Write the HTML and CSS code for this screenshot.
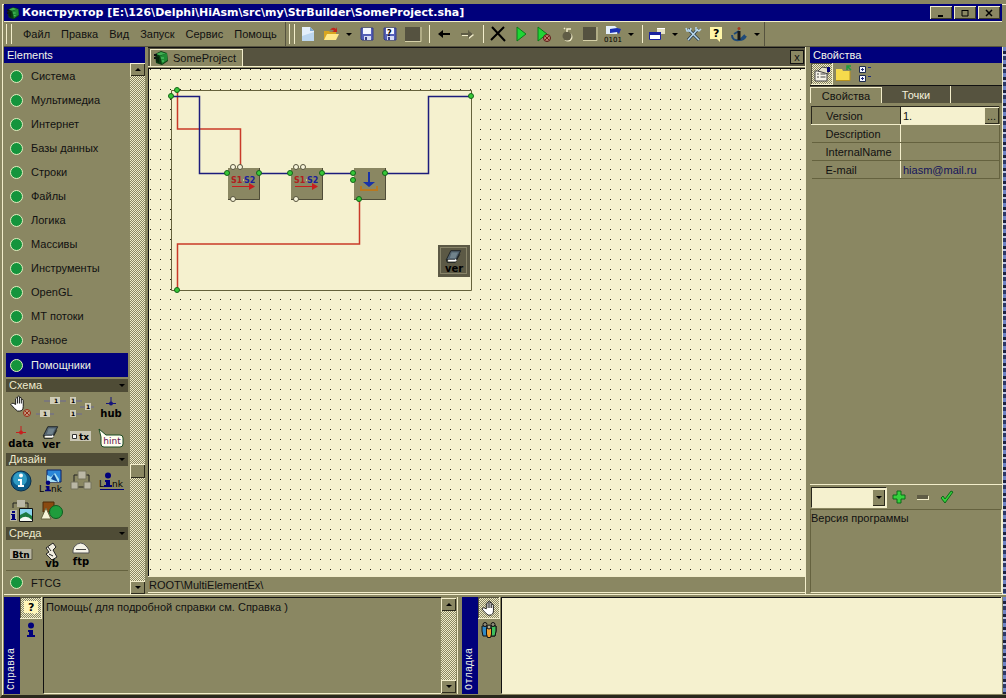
FILE: index.html
```html
<!DOCTYPE html>
<html lang="ru">
<head>
<meta charset="utf-8">
<title>Конструктор</title>
<link rel="stylesheet" href="styles.css">
</head>
<body>
<svg class="defs" aria-hidden="true">
  <symbol id="cube" viewBox="0 0 16 16"><path d="M2 4 8 1l6 2 1 8-6 4-6-2z" fill="#0a3d12"/><path d="M7 6l7-3 .5 7L9 14z" fill="#1f8a34"/><path d="M3 4l5-2 5 1.500-6 2z" fill="#3fae52"/><path d="M3 6l3 1v6l-3-2z" fill="#08240c"/><path d="M8 8h3M9 11h2" stroke="#5bd070"/><path d="M1 5h3M1 8h2" stroke="#111" stroke-width="2"/></symbol>
  <symbol id="floppy" viewBox="0 0 16 16"><path d="M2 2h12v12H3l-1-1z" fill="#5560b8" stroke="#343c88"/><path d="M4 2h8v6H4z" fill="#f4f6ff"/><path d="M5 10h7v4H5z" fill="#d5daf2"/><path d="M6 11h2v3H6z" fill="#343c88"/></symbol>
  <symbol id="book" viewBox="0 0 20 20"><path d="M7 3h11l-5 10H2z" fill="#53636f" stroke="#1b2022"/><path d="M8 5h7l-3 6H6z" fill="#71838c"/><path d="M2 13l1 3h9l5-9" fill="none" stroke="#1b2022"/><path d="M4 14h8l1-1" fill="none" stroke="#fff" stroke-width="2"/></symbol>
  <symbol id="man" viewBox="0 0 16 16"><circle cx="8" cy="3.500" r="3" fill="#00007b"/><path d="M5 8h5v5h2v2H4v-2h2v-3H5z" fill="#00007b"/></symbol>
  <symbol id="hand" viewBox="0 0 18 18"><path d="M6 10V4q1-2 2 0V2q1.500-2 2 0v1q2-1.500 2 1v1q2-1 2 1v6q0 5-4 5H8Q5 15 1 10q1-2 3-1z" fill="#fff" stroke="#111"/><path d="M8 4v5M10 3v6M12 5v4" stroke="#111"/></symbol>
</svg>
<div class="app">
  <header class="title">
    <svg class="i14"><use href="#cube"/></svg>
    <h1>Конструктор [E:\126\Delphi\HiAsm\src\my\StrBuilder\SomeProject.sha]</h1>
    <button class="win" aria-label="Свернуть"><svg viewBox="0 0 10 10"><path d="M2 8h5" stroke="#000" stroke-width="2"/></svg></button>
    <button class="win" aria-label="Развернуть"><svg viewBox="0 0 10 10"><path d="M2 2.500h6M2 2v6h6V2" fill="none" stroke="#000"/></svg></button>
    <button class="win" aria-label="Закрыть"><svg viewBox="0 0 10 10"><path d="M2 2l6 6M8 2l-6 6" stroke="#000" stroke-width="1.500"/></svg></button>
  </header>
  <div class="bars">
    <nav class="menu grip"><button>Файл</button><button>Правка</button><button>Вид</button><button>Запуск</button><button>Сервис</button><button>Помощь</button></nav>
    <div class="tools grip">
      <button aria-label="Новый"><svg viewBox="0 0 16 16"><path d="M2 1h8l4 4v10H2z" fill="#e4effa"/><path d="M2 10l12-4v9H2z" fill="#bcd6ee"/><path d="M10 1v4h4z" fill="#7fa9d3"/></svg></button>
      <button aria-label="Открыть"><svg viewBox="0 0 16 16"><path d="M1 5h5l1 1h6v8H1z" fill="#d8a520"/><path d="M4 8h12l-3 6H1z" fill="#ffe98a"/><path d="M7 4q3-4 6-1l1-2v5h-5l2-1q-1-2-4-1z" fill="#c3261c"/></svg></button>
      <button class="caret" aria-label="Недавние"></button>
      <button aria-label="Сохранить"><svg><use href="#floppy"/></svg></button>
      <button aria-label="Сохранить как"><svg viewBox="0 0 16 16"><use href="#floppy"/><text x="5" y="10" class="q">?</text></svg></button>
      <button aria-label="Закрыть проект"><svg class="sq" viewBox="0 0 16 16"><path d="M0 1h15v14H0z" fill="#555240"/><path d="M0 15.500h16V1" fill="none" stroke="#d6d1a8"/></svg></button>
      <i class="sep"></i>
      <button aria-label="Назад"><svg viewBox="0 0 16 16"><path d="M2 8l5-4v3h7v2H7v3z"/></svg></button>
      <button aria-label="Вперёд"><svg viewBox="0 0 16 16"><path d="M15 9l-5-4v3H3v2h7v3z" fill="#f3eecb"/><path d="M14 8L9 4v3H2v2h7v3z" fill="#5f5c45"/></svg></button>
      <i class="sep"></i>
      <button aria-label="Удалить"><svg viewBox="0 0 16 16"><path d="M2 1l13 14M14 1L1 14" stroke="#000" stroke-width="2"/></svg></button>
      <button aria-label="Запуск"><svg viewBox="0 0 16 16"><path d="M4 1l9 7-9 7z" fill="#1fd534" stroke="#0b7a18"/></svg></button>
      <button aria-label="Стоп"><svg viewBox="0 0 16 16"><path d="M2 1l9 7-9 7z" fill="#1fd534" stroke="#0b7a18"/><circle cx="11" cy="12" r="3.500" fill="#b98070" stroke="#5a1712"/><path d="M9 10l4 4M13 10l-4 4" stroke="#7a1712"/></svg></button>
      <button aria-label="Отладка"><svg viewBox="0 0 16 16"><circle cx="9" cy="11" r="4.500" fill="#f3eecb"/><circle cx="8" cy="10" r="4.500" fill="#5f5c45"/><path d="M8 6V3h4M5 2l1 1" fill="none" stroke="#f3eecb" stroke-width="1.500"/></svg></button>
      <button aria-label="Остановить"><svg class="sq" viewBox="0 0 16 16"><path d="M1 1h13v13H1z" fill="#555240"/><path d="M1 14.500h14V1" fill="none" stroke="#d6d1a8"/></svg></button>
      <button aria-label="Код"><svg viewBox="0 0 16 16"><path d="M1 0h9l2 2v6H1z" fill="#e4effa"/><path d="M5 3l7-1 4 1-2 5-2-2-7 1z" fill="#1a2fb4"/><text x="8" y="16" class="bits">0101</text></svg></button>
      <button class="caret" aria-label="Варианты кода"></button>
      <i class="sep"></i>
      <button aria-label="Окна"><svg viewBox="0 0 16 16"><path d="M8 2h8v6H8z" fill="#e6e2c4"/><path d="M8 2h8v1H8z" fill="#fff"/><path d="M.5 6.500h11v7H.5z" fill="#fff" stroke="#1a22a0"/><path d="M0 6h12v3H0z" fill="#1a22a0"/></svg></button>
      <button class="caret" aria-label="Список окон"></button>
      <button aria-label="Настройки"><svg viewBox="0 0 16 16"><path d="M3 3l11 11M13 3L3 14" stroke="#26394c" stroke-width="3"/><path d="M3 3l11 11M13 3L3 14" stroke="#b8d8ee" stroke-width="1.500"/><path d="M1 2l1 3 3 0 1-3M11 1v3l3 1 2-2" fill="none" stroke="#b8d8ee" stroke-width="1.500"/></svg></button>
      <button aria-label="Справка"><svg viewBox="0 0 16 16"><path d="M2 1h12v12h-2v3l-3-3H2z" fill="#fff6a8"/><text x="5" y="11" class="q big">?</text></svg></button>
      <button aria-label="Сайт"><svg viewBox="0 0 16 16"><path d="M1 9q0 6 7 5 5 0 7-4M3 8l5-3M14 9l-5 5" fill="none" stroke="#1f4a78" stroke-width="2"/><path d="M8 5v9" stroke="#181818" stroke-width="3"/><circle cx="8" cy="2.500" r="1.500" fill="#a03a20"/></svg></button>
      <button class="caret" aria-label="Ещё"></button>
    </div>
  </div>

  <main class="main">
    <aside class="elements">
      <h2 class="cap">Elements</h2>
      <div class="scrollpane">
        <div class="list">
          <button class="cat">Система</button><button class="cat">Мультимедиа</button><button class="cat">Интернет</button><button class="cat">Базы данных</button><button class="cat">Строки</button><button class="cat">Файлы</button><button class="cat">Логика</button><button class="cat">Массивы</button><button class="cat">Инструменты</button><button class="cat">OpenGL</button><button class="cat">МТ потоки</button><button class="cat">Разное</button><button class="cat on">Помощники</button>
          <h3 class="sec">Схема</h3>
          <div class="grid">
            <svg viewBox="0 0 30 30"><svg x="4" y="3" width="17" height="17"><use href="#hand"/></svg><circle cx="21" cy="21" r="3.500" fill="#c09a80" stroke="#9a2a14"/><path d="M19 19l4 4M23 19l-4 4" stroke="#9a2a14"/></svg>
            <svg viewBox="0 0 30 30"><path d="M8 9h22M0 22h18" stroke="#6b6894"/><path d="M14 5h10v7H14zM4 18h10v7H4z" fill="#d0cdb8"/><text x="18" y="11" class="one">1</text><text x="7" y="24" class="one">1</text></svg>
            <svg viewBox="0 0 30 30"><path d="M4 9h12M4 22h12M14 15h14" stroke="#6b6894"/><path d="M4 5h6v7H4zM4 18h6v7H4zM19 11h6v7h-6z" fill="#d0cdb8"/><text x="5" y="11" class="one">1</text><text x="5" y="24" class="one">1</text><text x="20" y="17" class="one">1</text></svg>
            <svg viewBox="0 0 30 30"><path d="M15 5v8M10 11.500h10" stroke="#14147b"/><circle cx="15" cy="11.500" r="2" fill="#14147b"/><text x="15" y="25" class="lbl">hub</text></svg>
            <svg viewBox="0 0 30 30"><path d="M15 4v8M10 10.500h10" stroke="#c81e1e"/><circle cx="15" cy="10.500" r="2" fill="#c81e1e"/><text x="15" y="25" class="lbl">data</text></svg>
            <svg viewBox="0 0 30 30"><svg x="5" y="2" width="19" height="18"><use href="#book"/></svg><text x="15" y="26" class="lbl">ver</text></svg>
            <svg viewBox="0 0 30 30"><path d="M4 9h21v10H4z" fill="#c9c6b4"/><path d="M6.500 12.500h4v4h-4z" fill="#fff" stroke="#333"/><text x="18" y="18" class="lbl sm">tx</text></svg>
            <svg viewBox="0 0 30 30"><path d="M3 7l7 6h14q3 0 3 3v6q0 3-3 3H8q-3 0-3-3v-7z" fill="#fffef0" stroke="#1b4a22"/><text x="16" y="22" class="hint">hint</text></svg>
          </div>
          <h3 class="sec">Дизайн</h3>
          <div class="grid">
            <svg viewBox="0 0 30 30"><circle cx="15" cy="15" r="10" fill="#0d5a86" stroke="#0a2f4c"/><circle cx="14" cy="13" r="7" fill="#2f9bc4"/><circle cx="15" cy="9.500" r="2" fill="#fff"/><path d="M12 13h4v6h2v2h-6v-2h2v-4h-2z" fill="#fff"/></svg>
            <svg viewBox="0 0 30 30"><path d="M11 4h14v12H11z" fill="#2a86d8" stroke="#0a1f66"/><path d="M11 16V9l4 2 4-4 4 6v3z" fill="#a8e0f4"/><path d="M15 13l3-5 4 8z" fill="#0c4c9c"/><text x="3" y="26" class="lnk">L</text><svg x="6" y="14" width="12" height="12"><use href="#man"/></svg><text x="15" y="26" class="lnk">nk</text></svg>
            <svg viewBox="0 0 30 30"><path d="M8 17V9h15v8M9 21h10" fill="none" stroke="#222"/><path d="M12 5h8v8h-8zM5 16h7v7H5zM18 16h7v7h-7z" fill="#bab7a5" stroke="#77745c"/></svg>
            <svg viewBox="0 0 30 30"><text x="3" y="21" class="lnk">L</text><svg x="4" y="6" width="16" height="16"><use href="#man"/></svg><text x="16" y="21" class="lnk">nk</text><path d="M4 23.500h24" stroke="#00007b"/></svg>
            <svg viewBox="0 0 30 30"><path d="M7 12V7h15v8" fill="none" stroke="#222"/><path d="M11 4h8v7h-8z" fill="#bab7a5"/><path d="M4 14h7v11H4z" fill="#bab7a5"/><path d="M6 15h3v2H6zM5 18h4v5h1v1H5v-1h1v-4H5z" fill="#00007b"/><path d="M13.500 12.500h13v13h-13z" fill="#8ad4ee" stroke="#111"/><path d="M14 19l6-3 6 4v5H14z" fill="#1d7a40"/><path d="M14 23q6-5 12 1v1H14z" fill="#f4f8f0"/></svg>
            <svg viewBox="0 0 30 30"><path d="M7 6h11v10H7z" fill="#8a4a10" stroke="#4c2a08"/><circle cx="20" cy="16" r="6.500" fill="#1f9c3c" stroke="#0d5c20"/><path d="M10 12l5 11H5z" fill="#f7f4d8" stroke="#66633f"/></svg>
          </div>
          <h3 class="sec">Среда</h3>
          <div class="grid">
            <svg viewBox="0 0 30 30"><path d="M4 9h22v10H4z" fill="#b9b6a2"/><path d="M4 19.500h22V9" fill="none" stroke="#5b5842"/><text x="15" y="18" class="lbl sm">Btn</text></svg>
            <svg viewBox="0 0 30 30"><path d="M10 8l7-5 3 4-3 3 4 7-5 3-6-6 3-2z" fill="#f1eee0" stroke="#222"/><path d="M12 7l3 4M13 14l4 2" stroke="#222"/><text x="16" y="27" class="lbl">vb</text></svg>
            <svg viewBox="0 0 30 30"><path d="M8 7q7-8 13 0l2 3v3H7v-3z" fill="#f4f2e6" stroke="#555"/><path d="M10 9.500h10" stroke="#444"/><text x="15" y="25" class="lbl">ftp</text></svg>
          </div>
          <button class="cat last">FTCG</button>
        </div>
        <div class="sb"><button class="sbb up" aria-label="Вверх"></button><div class="thumb"></div><button class="sbb" aria-label="Вниз"></button></div>
      </div>
    </aside>

    <section class="work">
      <div class="tabbar">
        <button class="tab"><svg class="i16"><use href="#cube"/></svg>SomeProject</button>
        <button class="x" aria-label="Закрыть вкладку">x</button>
      </div>
      <div class="canvas">
        <svg class="scheme" width="310" height="212" viewBox="0 0 310 212">
          <path d="M5.500 5.500h300v200h-300z" fill="#f5f1cf" stroke="#66623c"/>
          <g fill="none" stroke="#c93a28" stroke-width="1.500"><path d="M11.500 5v39h63v37"/><path d="M193.500 114v45h-182v46"/></g>
          <g fill="none" stroke="#1c1c7c" stroke-width="1.500"><path d="M5 11.500h28.500v77H62M94 88.500h31M157 88.500h31M219 88.500h43.500v-77H305"/></g>
          <g transform="translate(62 83)"><path d="M0 0h32v32H0z" fill="#8a8762"/><path d="M0 31.500h31.500V0" fill="none" stroke="#4f4c38"/><text x="3" y="15" class="s1">S1</text><path d="M15 12h1" stroke="#c8c090" stroke-width="2"/><text x="16" y="15" class="s2">S2</text><path d="M4 18.500h18" stroke="#c81e1e"/><path d="M21 15l6 3.500-6 3.500z" fill="#c81e1e"/></g>
          <g transform="translate(125 83)"><path d="M0 0h32v32H0z" fill="#8a8762"/><path d="M0 31.500h31.500V0" fill="none" stroke="#4f4c38"/><text x="3" y="15" class="s1">S1</text><path d="M15 12h1" stroke="#c8c090" stroke-width="2"/><text x="16" y="15" class="s2">S2</text><path d="M4 18.500h18" stroke="#c81e1e"/><path d="M21 15l6 3.500-6 3.500z" fill="#c81e1e"/></g>
          <path d="M188 83h32v32h-32z" fill="#8a8762"/><path d="M188 114.500h31.500V83" fill="none" stroke="#4f4c38"/>
          <path d="M195 101v4h16v-4" fill="none" stroke="#b87820" stroke-width="2"/><path d="M202 87h2v10h5l-6 5-6-5h5z" fill="#1832a8"/>
          <g fill="#38c838" stroke="#136318"><circle cx="11" cy="5" r="2.500"/><circle cx="5" cy="11" r="2.500"/><circle cx="305" cy="11" r="2.500"/><circle cx="61" cy="88" r="2.500"/><circle cx="93" cy="88" r="2.500"/><circle cx="124" cy="88" r="2.500"/><circle cx="156" cy="88" r="2.500"/><circle cx="187" cy="88" r="2.500"/><circle cx="187" cy="95" r="2.500"/><circle cx="219" cy="88" r="2.500"/><circle cx="193" cy="114" r="2.500"/><circle cx="11" cy="205" r="2.500"/></g>
          <g fill="#f8f5dc" stroke="#55523c"><circle cx="67" cy="82" r="2.500"/><circle cx="74" cy="82" r="2.500"/><circle cx="67" cy="114" r="2.500"/><circle cx="130" cy="82" r="2.500"/><circle cx="137" cy="82" r="2.500"/><circle cx="130" cy="114" r="2.500"/></g>
          <path d="M272 160h32v32h-32z" fill="#5c5945"/><path d="M274.500 162.500h26v26h-26z" fill="none" stroke="#b5b18e" stroke-dasharray="1 1"/>
          <svg x="278" y="163" width="19" height="18"><use href="#book"/></svg><text x="288" y="187" class="lbl">ver</text>
        </svg>
      </div>
      <div class="status">ROOT\MultiElementEx\</div>
    </section>

    <aside class="props">
      <h2 class="cap">Свойства</h2>
      <div class="ptools">
        <button class="pressed" aria-label="Свойства"><svg viewBox="0 0 18 18"><path d="M2 6h12v10H2z" fill="#f4f2e6" stroke="#444"/><path d="M4 9h2M7.500 9h5M4 12h2M7.500 12h5" stroke="#444"/><path d="M5 6l4-4 6 1v6l-3-1z" fill="#e4e0c8" stroke="#444"/><path d="M14 2h3v5h-3z" fill="#00007b"/></svg></button>
        <button aria-label="Папка"><svg viewBox="0 0 18 18"><path d="M1 4h6l1 2h7v10H1z" fill="#f6da4c"/><path d="M1 15.500h14V6" fill="none" stroke="#b8921c"/><path d="M12 5V1h4M12 1l4 4" fill="none" stroke="#1f9c3c" stroke-width="1.500"/></svg></button>
        <button aria-label="Дерево"><svg viewBox="0 0 18 18"><path d="M2.500 1.500h6v6h-6zM2.500 10.500h6v6h-6z" fill="#f4f6ff" stroke="#1c2a4c"/><path d="M4 4.500h3M5.500 3v3M4 13.500h3M5.500 12v3M11 2.500h3M11 11.500h3" stroke="#1c2a7c"/></svg></button>
      </div>
      <div class="ptabs"><button class="sel">Свойства</button><button>Точки</button></div>
      <table class="ptable">
        <tr class="edit"><th><label for="ver">Version</label></th><td><div class="cell"><input id="ver" value="1."><button aria-label="Выбрать">...</button></div></td></tr>
        <tr><th>Description</th><td></td></tr>
        <tr><th>InternalName</th><td></td></tr>
        <tr><th>E-mail</th><td>hiasm@mail.ru</td></tr>
      </table>
      <div class="fill"></div>
      <div class="ctl">
        <div class="combo"><select aria-label="Значение"><option></option></select></div>
        <button aria-label="Добавить"><svg viewBox="0 0 14 14"><path d="M5 1h4v4h4v4H9v4H5V9H1V5h4z" fill="#35d13c" stroke="#0d6a18"/></svg></button>
        <button aria-label="Убрать"><svg viewBox="0 0 14 14"><path d="M1 6h12v4H1z" fill="#f3eecb"/><path d="M1 5h11v4H1z" fill="#5f5c45"/></svg></button>
        <button aria-label="Применить"><svg viewBox="0 0 14 14"><path d="M1 8l2-2 2 3 6-8 2 1-8 11z" fill="#35d13c" stroke="#0d6a18"/></svg></button>
      </div>
      <div class="desc">Версия программы</div>
    </aside>
    <i class="desk"></i>
  </main>

  <footer class="dock">
    <section class="help">
      <h2 class="vcap">Справка</h2>
      <div class="side"><button class="pressed" aria-label="Помощь"><svg viewBox="0 0 16 16"><path d="M1 1h14v12h-3v2l-3-2H1z" fill="#fff6b8"/><text x="5" y="11" class="q big">?</text></svg></button><button aria-label="Информация"><svg><use href="#man"/></svg></button></div>
      <div class="text">Помощь( для подробной справки см. Справка )</div>
      <div class="sb"><button class="sbb up" aria-label="Вверх"></button><button class="sbb" aria-label="Вниз"></button></div>
    </section>
    <section class="debug">
      <h2 class="vcap">Отладка</h2>
      <div class="side"><button class="pressed" aria-label="Рука"><svg><use href="#hand"/></svg></button><button aria-label="Люди"><svg viewBox="0 0 16 16"><path d="M1 4h5v10H2L1 9zM10 4h5v5l-1 5h-4z" fill="#2f8ac4" stroke="#111"/><path d="M10 4h5v5l-1 5h-4z" fill="#3fbf5c" stroke="#111"/><path d="M5.500 6h5v6l-1 3.500h-3l-1-3.500z" fill="#f0a030" stroke="#111"/><circle cx="4" cy="2.500" r="2" fill="#8f8c78" stroke="#111"/><circle cx="12" cy="2.500" r="2" fill="#8f8c78" stroke="#111"/><circle cx="8" cy="5" r="2" fill="#b0ac94" stroke="#111"/></svg></button></div>
      <textarea aria-label="Отладка"></textarea>
    </section>
    <i class="desk"></i>
  </footer>
</div>
</body>
</html>
```
FILE: styles.css
```css
:root {
  --base: #8a8762;
  --light: #f3eecb;
  --cream: #f5f1cf;
  --dark: #56533f;
  --navy: #00007b;
  --dither: repeating-conic-gradient(#f0ecc9 0 25%, #8a8762 0 50%) 0 0 / 2px 2px;
}
* { box-sizing: border-box; }
body { margin: 0; background: var(--base); color: #111; font: 11px/16px "Liberation Sans", Arial, sans-serif; }
h1, h2, h3 { margin: 0; font-size: 11px; font-weight: normal; }
button, input, select, textarea { font: inherit; color: inherit; border: 0; border-radius: 0; padding: 0; margin: 0; background: none; outline: 0; }
svg { display: block; flex: none; }
i { display: block; }
.defs { position: absolute; width: 0; height: 0; }
.i14 { width: 14px; height: 14px; }
.i16 { width: 16px; height: 16px; }

.app { height: 100vh; min-height: 500px; display: flex; flex-direction: column; border: solid var(--base); border-width: 4px 0 0 2px; box-shadow: inset 1px 1px 0 var(--light); padding: 0 0 0 2px; border-bottom: 3px solid #29271c; overflow: hidden; }
.title { display: flex; align-items: center; gap: 2px; height: 17px; flex: none; margin-right: 4px; padding: 0 2px; background: var(--navy); color: #fff; }
.title h1 { flex: 1; font: bold 11px/16px "DejaVu Sans", Verdana, sans-serif; white-space: nowrap; overflow: hidden; }
.win { width: 22px; height: 13px; display: grid; place-items: center; background: var(--base); box-shadow: inset 1px 1px var(--light), inset -1px -1px #3c3a2a; }
.win svg { width: 10px; height: 10px; }

.bars { display: flex; height: 26px; flex: none; margin-right: 4px; border-top: 1px solid var(--light); border-bottom: 1px solid var(--dark); }
.grip { display: flex; align-items: center; border-right: 1px solid var(--dark); }
.grip::before { content: ""; width: 4px; height: 20px; margin: 0 2px; border: solid var(--light); border-width: 0 1px; }
.menu { padding-right: 2px; }
.menu button { padding: 0 6px 0 5px; }
.menu button:first-of-type { margin-left: 4px; }
.tools::before { margin: 0 2px 0 3px; }
.tools button { width: 23px; height: 22px; display: grid; place-items: center; }
.tools svg { width: 16px; height: 16px; overflow: visible; }
.tools .caret { width: 13px; }
.caret::before { content: ""; border: 3px solid transparent; border-top-color: #000; border-bottom: 0; }
.sep { width: 1px; height: 18px; margin: 0 3px 0 4px; background: var(--light); }
.q { font: bold 8px "DejaVu Sans", sans-serif; }
.big { font-size: 11px; }
.bits { font: 7px "DejaVu Sans", sans-serif; text-anchor: middle; }

.main { flex: 1; min-height: 0; display: flex; }
.cap { height: 16px; flex: none; padding-left: 3px; background: var(--navy); color: #f4f4ea; }
.elements { width: 141px; display: flex; flex-direction: column; }
.scrollpane { flex: 1; min-height: 0; display: flex; }
.list { flex: 1; display: flex; flex-direction: column; padding: 1px 2px 0; overflow: hidden; }
.cat { display: flex; align-items: center; gap: 8px; height: 24px; flex: none; padding-left: 4px; text-align: left; }
.cat::before { content: ""; width: 11px; height: 11px; border-radius: 50%; background: #14943c; border: 1px solid #e4efc0; }
.cat.on { margin: 1px 0; background: var(--navy); color: #eef2e4; }
.cat.last { border-top: 1px solid #65623f; }
.sec { display: flex; align-items: center; justify-content: space-between; height: 13px; line-height: 13px; flex: none; margin-top: 1px; padding: 0 3px; background: #4f4c36; color: #eeeacb; }
.sec::after { content: ""; border: 3px solid transparent; border-top-color: #000; border-bottom: 0; }
.grid { display: grid; grid-template-columns: repeat(4, 30px); grid-auto-rows: 30px; }
.grid svg { overflow: visible; }
.lbl { font: bold 10px "DejaVu Sans", sans-serif; text-anchor: middle; }
.sm { font-size: 9px; }
.one { font: bold 6px "DejaVu Sans", sans-serif; }
.hint { font: 9px "DejaVu Sans", sans-serif; fill: #60104c; text-anchor: middle; }
.lnk { font: 9px "DejaVu Sans", sans-serif; }
.s1, .s2 { font: bold 8px "DejaVu Sans", sans-serif; fill: #b02020; }
.s2 { fill: #1a1f9c; }
.sb { width: 15px; flex: none; display: flex; flex-direction: column; background: var(--dither); }
.sbb { width: 100%; height: 13px; display: grid; place-items: center; background: var(--base); box-shadow: inset 1px 1px var(--light), inset -1px -1px #2c2a1c; }
.sbb::before { content: ""; border: 3px solid transparent; border-top-color: #000; border-bottom: 0; }
.sbb.up::before { transform: scaleY(-1); }
.sbb:last-child { margin-top: auto; }
.thumb { height: 14px; margin-top: 388px; background: var(--base); box-shadow: inset 1px 1px var(--light), inset -1px -1px #2c2a1c; }

.work { flex: 1; min-width: 0; display: flex; flex-direction: column; margin-left: 3px; border-right: 1px solid var(--light); }
.tabbar { display: flex; justify-content: space-between; height: 20px; flex: none; padding: 1px 0 0 2px; background: var(--dark); border-top: 1px solid #111; border-bottom: 1px solid var(--light); }
.tab { display: flex; align-items: center; gap: 4px; padding: 0 6px 0 2px; background: var(--base); border: 1px solid var(--light); border-bottom: 0; }
.x { width: 14px; height: 14px; line-height: 11px; margin: 1px 1px 0 0; background: var(--base); border: 1px solid #111; }
.canvas { flex: 1; min-height: 0; margin-top: 1px; padding: 16px 0 0 17px; overflow: hidden; border-left: 1px solid #111; border-top: 1px solid #111; background: linear-gradient(90deg, transparent 1px, var(--cream) 1px) 1px 0 / 10px 10px, linear-gradient(#26241a 1px, var(--cream) 1px) 0 0 / 10px 10px; }
.scheme { overflow: visible; }
.status { height: 17px; flex: none; border-top: 1px solid var(--light); border-bottom: 1px solid var(--light); margin-bottom: 1px; padding-left: 1px; }

.props { width: 193px; display: flex; flex-direction: column; margin-left: 4px; border-right: 1px solid var(--light); }
.ptools { display: flex; height: 22px; flex: none; padding-left: 1px; }
.ptools button { width: 22px; height: 22px; display: grid; place-items: center; }
.ptools svg { width: 18px; height: 18px; }
.pressed { background: var(--dither); box-shadow: inset -1px -1px var(--light), inset 1px 1px #55523c; }
.ptabs { display: flex; height: 18px; flex: none; background: var(--dark); border-top: 1px solid #111; color: #f4f1dc; margin-bottom: 3px; }
.ptabs button { width: 69px; border-right: 1px solid var(--light); }
.ptabs .sel { width: 72px; margin-top: 1px; color: #111; background: var(--base); border-left: 1px solid var(--light); border-top: 1px solid var(--light); }
.ptable { width: 189px; margin-left: 1px; border-collapse: collapse; table-layout: fixed; }
.ptable th { width: 89px; text-align: left; font-weight: normal; padding: 0 0 0 14px; }
.ptable td { padding: 0 0 0 2px; color: #14145c; border-left: 1px solid var(--light); }
.ptable th, .ptable td { height: 18px; line-height: 16px; border-bottom: 1px solid #65623f; border-right: 1px solid #65623f; }
.ptable th { border-right-color: var(--light); }
.ptable .edit th { border: 1px solid #29271c; border-bottom-color: var(--light); }
.ptable .edit td { padding: 0; border-top: 1px solid #29271c; border-bottom-color: var(--light); }
.cell { display: flex; height: 17px; background: var(--cream); color: #111; }
.cell input { flex: 1; min-width: 0; padding-left: 2px; }
.cell button { width: 15px; line-height: 12px; background: var(--base); box-shadow: inset 1px 1px var(--light), inset -1px -1px #2c2a1c; }
.fill { flex: 1; }
.ctl { display: flex; align-items: center; gap: 9px; height: 25px; flex: none; border-top: 1px solid var(--light); padding-left: 1px; }
.combo { position: relative; width: 76px; height: 21px; margin-right: -4px; border: 1px solid #29271c; border-right-color: var(--light); border-bottom-color: var(--light); background: var(--cream); }
.combo select { appearance: none; width: 100%; height: 100%; }
.combo::before { content: ""; position: absolute; right: 1px; top: 1px; width: 13px; height: 17px; background: var(--base); box-shadow: inset 1px 1px var(--light), inset -1px -1px #2c2a1c; pointer-events: none; }
.combo::after { content: ""; position: absolute; right: 4px; top: 8px; border: 3px solid transparent; border-top-color: #000; border-bottom: 0; pointer-events: none; }
.ctl svg { width: 14px; height: 14px; }
.desc { height: 84px; flex: none; border: 1px solid #65623f; border-right-color: var(--light); border-bottom-color: var(--light); margin-bottom: 1px; }
.desk { width: 3px; flex: none; background: repeating-linear-gradient(#6d83c4 0 4px, #1b2140 4px 7px, #b9c4e4 7px 9px, #2c3866 9px 13px); }
.ctl button + button { margin-left: 1px; }

.dock { display: flex; height: 101px; flex: none; border-top: 1px solid var(--light); padding: 2px 0 1px; }
.help { flex: 0 1 454px; display: flex; min-width: 0; border-right: 1px solid var(--light); margin-right: 4px; }
.debug { flex: 1; display: flex; min-width: 0; border-right: 1px solid var(--light); margin-right: 1px; }
.vcap { width: 16px; flex: none; writing-mode: vertical-rl; transform: rotate(180deg); padding-top: 4px; line-height: 16px; background: var(--navy); color: #eef2e4; font-family: "Liberation Mono", monospace; font-size: 10px; }
.side { width: 22px; flex: none; display: flex; flex-direction: column; }
.side button { width: 22px; height: 22px; display: grid; place-items: center; }
.side svg { width: 16px; height: 16px; }
.text, .debug textarea { flex: 1; min-width: 0; margin-left: 1px; border: solid #111; border-width: 1px 0 0 1px; border-bottom: 1px solid var(--light); padding: 1px 2px; }
.help .sb { margin: 1px 1px 1px 0; }
.debug textarea { background: var(--cream); resize: none; }
```
